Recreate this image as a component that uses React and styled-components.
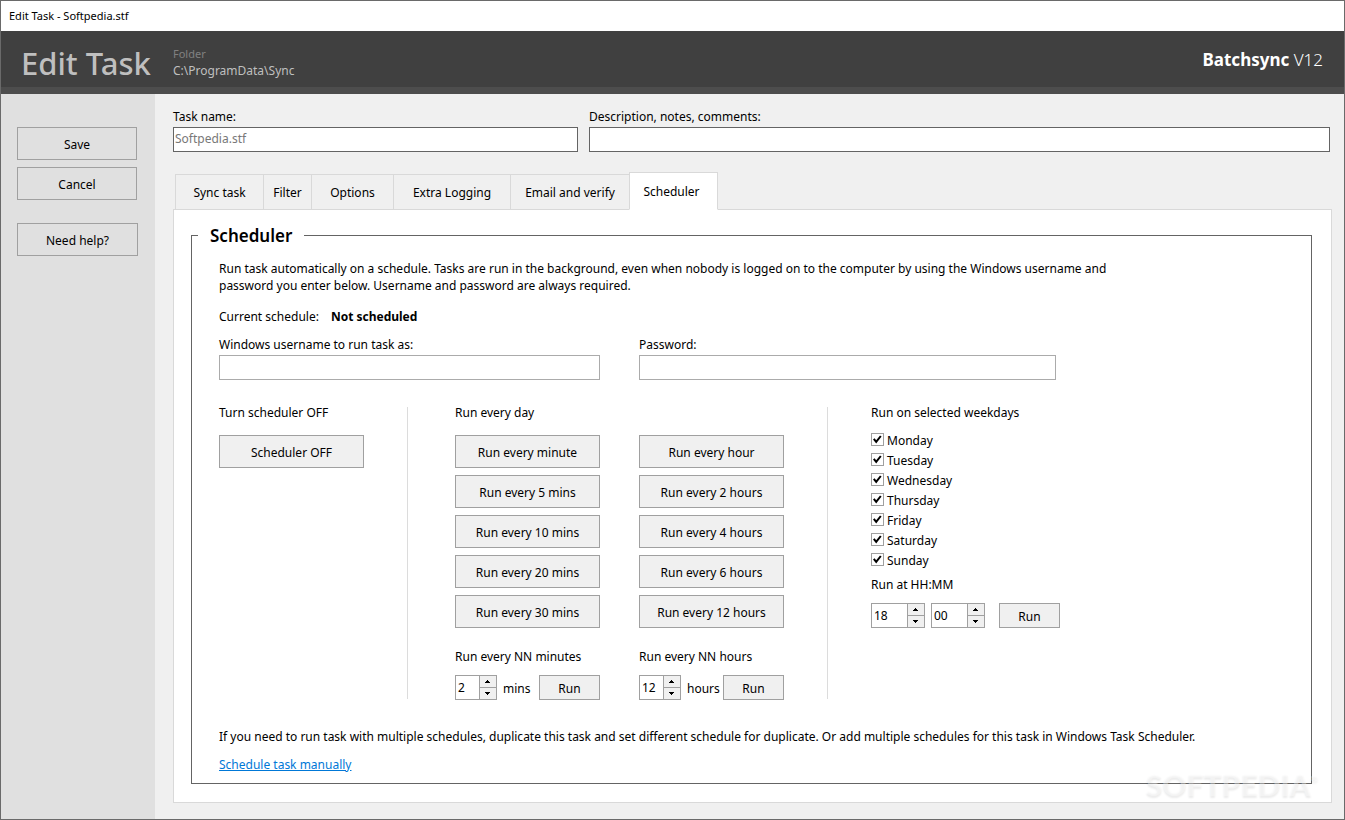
import React, { useState } from 'react';
import styled, { createGlobalStyle, css } from 'styled-components';

const GlobalStyle = createGlobalStyle`
  *, *::before, *::after {
    box-sizing: border-box;
  }

  body {
    margin: 0;
    background: #f0f0f0;
    color: #000;
    font: 12px/17px 'Noto Sans', 'Open Sans', sans-serif;
  }

  button, input {
    font: inherit;
    color: inherit;
    border-radius: 0;
    margin: 0;
  }
`;

const Window = styled.div`
  position: relative;
  display: flex;
  flex-direction: column;
  min-height: 100vh;
  border: 1px solid #6a6a6a;
`;

const TitleBar = styled.div`
  height: 30px;
  padding: 0 8px;
  background: #fff;
  font-size: 11px;
  line-height: 30px;
`;

const Header = styled.header`
  display: flex;
  align-items: center;
  height: 63px;
  padding: 0 21px 0 20px;
  background: #404040;
  border-bottom: 7px solid #4d4d4d;
`;

const Heading = styled.h1`
  width: 152px;
  margin: 0;
  padding-top: 7px;
  color: #bfbfbf;
  font-size: 31px;
  font-weight: 500;
  line-height: 40px;
  white-space: nowrap;
`;

const Folder = styled.div`
  flex: 1;
  padding-top: 6px;
  color: #bfbfbf;
`;

const FolderLabel = styled.div`
  color: #808080;
  font-size: 11px;
`;

const Brand = styled.div`
  padding-top: 1px;
  color: #fff;
  font-size: 17px;
  font-weight: 300;
  line-height: 24px;

  b {
    font-weight: 700;
  }
`;

const Body = styled.div`
  display: flex;
  flex: 1;
`;

const Sidebar = styled.nav`
  display: flex;
  flex-direction: column;
  gap: 7px;
  width: 154px;
  padding: 33px 17px 0 16px;
  background: #e0e0e0;
`;

const Button = styled.button`
  flex: none;
  width: ${({ $small }) => ($small ? '61px' : '100%')};
  height: ${({ $small }) => ($small ? 25 : 33)}px;
  padding: 2px 0 0;
  background: #f0f0f0;
  border: 1px solid #a0a0a0;
  white-space: nowrap;
`;

const SideButton = styled(Button)`
  width: 120px;
  background: #e0e0e0;
`;

const HelpButton = styled(SideButton)`
  width: 121px;
  margin-top: 16px;
`;

const Main = styled.main`
  display: flex;
  flex: 1;
  flex-direction: column;
  min-width: 0;
  padding: 14px 12px 16px 18px;
`;

const TaskFields = styled.div`
  display: grid;
  grid-template-columns: 405fr 741fr;
  gap: 11px;
  margin-right: 2px;
`;

const Field = styled.label`
  display: flex;
  flex-direction: column;
  gap: 2px;
`;

const TextInput = styled.input`
  width: 100%;
  height: 25px;
  padding: 0 1px 2px;
  background: #fff;
  border: 1px solid ${({ $dark }) => ($dark ? '#646464' : '#ababab')};
  color: ${({ $muted }) => ($muted ? '#787878' : '#000')};
`;

const TabList = styled.div`
  display: flex;
  align-items: flex-end;
  height: 38px;
  margin: 20px 0 -1px 2px;
`;

const Tab = styled.button`
  width: ${({ $width }) => $width}px;
  height: 36px;
  padding: 0;
  background: #f0f0f0;
  border: 1px solid #d9d9d9;
  border-right: 0;

  ${({ $active }) =>
    $active &&
    css`
      height: 38px;
      padding: 0 4px 0 0;
      background: #fff;
      border-right: 1px solid #d9d9d9;
      border-bottom-color: #fff;
      z-index: 1;
    `}
`;

const TabPanel = styled.div`
  flex: 1;
  padding: 12px 19px 18px 17px;
  background: #fff;
  border: 1px solid #d9d9d9;
`;

const Group = styled.fieldset`
  min-width: 0;
  height: 100%;
  margin: 0;
  padding: 0 6px;
  border: 1px solid #646464;
`;

const Legend = styled.legend`
  padding: 2px 12px 0;
  font-size: 17px;
  font-weight: 600;
  line-height: 24px;
`;

const GroupBody = styled.div`
  padding: 12px 21px 10px;
`;

const Text = styled.p`
  max-width: ${({ $narrow }) => ($narrow ? '940px' : 'none')};
  margin: 0;
`;

const CurrentSchedule = styled.p`
  display: flex;
  gap: 12px;
  margin: 14px 0 11px;
`;

const Credentials = styled.div`
  display: grid;
  grid-template-columns: 381px 417px;
  gap: 39px;
`;

const Schedules = styled.div`
  display: grid;
  grid-template-columns: 145px 1px 333px 1px 1fr;
  column-gap: 43px;
  margin: 24px 0 28px;
`;

const Divider = styled.div`
  margin: 3px 0 1px;
  background: #dcdcdc;
`;

const Caption = styled.div`
  margin-bottom: ${({ $gap = 14 }) => $gap}px;
`;

const EveryDay = styled.section`
  padding-left: 4px;
`;

const Intervals = styled.div`
  display: grid;
  grid-template-columns: 145px 145px;
  gap: 7px 39px;
  margin-bottom: 20px;
`;

const CustomIntervals = styled(Intervals)`
  margin-bottom: 0;
`;

const Inline = styled.div`
  display: flex;
  align-items: center;
  gap: 6px;
`;

const Unit = styled.span`
  flex: 1;
  min-width: 0;
  margin-right: -6px;
  padding-top: 2px;
  white-space: nowrap;
`;

const Weekday = styled.label`
  display: flex;
  align-items: center;
  gap: 3px;
  height: 20px;
`;

const Tick = styled.span`
  display: grid;
  width: 13px;
  height: 13px;
  margin-bottom: 1px;

  input, svg {
    grid-area: 1 / 1;
    width: 13px;
    height: 13px;
  }

  input {
    appearance: none;
    background: #fff;
    border: 1px solid #a0a0a0;
  }

  svg {
    pointer-events: none;
    visibility: hidden;
  }

  input:checked + svg {
    visibility: visible;
  }
`;

const RunAt = styled.div`
  padding-top: 6px;
`;

const RunAtButton = styled(Button)`
  margin-left: 8px;
`;

const SpinnerBox = styled.span`
  display: flex;
  flex: none;
  width: ${({ $width }) => $width}px;
  height: 25px;
  background: #fff;
  border: 1px solid #a0a0a0;
`;

const SpinnerInput = styled.input`
  flex: 1;
  min-width: 0;
  padding: 0 0 0 2px;
  background: none;
  border: 0;
  outline: 0;
`;

const SpinnerButtons = styled.span`
  display: grid;
  flex: none;
  grid-template-rows: 12px 11px;
  width: 17px;
  border-left: 1px solid #a0a0a0;
`;

const SpinnerButton = styled.button`
  display: flex;
  align-items: center;
  justify-content: center;
  padding: 0 1px 0 0;
  background: #f0f0f0;
  border: 0;

  &:first-child {
    border-bottom: 1px solid #a0a0a0;
  }
`;

const Link = styled.a`
  display: inline-block;
  margin-top: 11px;
  color: #0078d7;
  text-decoration: underline;
`;

const Watermark = styled.div`
  position: absolute;
  right: 26px;
  bottom: 19px;
  color: rgba(255, 255, 255, 0.4);
  font: 900 30px/32px Lato, sans-serif;
  text-shadow: 0 2px 2px rgba(0, 0, 0, 0.08);
  pointer-events: none;

  sup {
    font-size: 9px;
    line-height: 9px;
    vertical-align: 14px;
  }
`;

const Spinner = ({ label, initial, max, pad = 1, width }) => {
  const [value, setValue] = useState(initial);
  const step = (by) =>
    setValue((v) => String(Math.min(max, Math.max(0, Number(v) + by))).padStart(pad, '0'));

  return (
    <SpinnerBox $width={width}>
      <SpinnerInput
        aria-label={label}
        inputMode="numeric"
        value={value}
        onChange={(e) => setValue(e.target.value)}
      />
      <SpinnerButtons>
        <SpinnerButton aria-label={`${label} up`} onClick={() => step(1)}>
          <svg width="5" height="3" viewBox="0 0 5 3" shapeRendering="crispEdges">
            <path d="M2 0h1v1h1v1h1v1H0V2h1V1h1z" />
          </svg>
        </SpinnerButton>
        <SpinnerButton aria-label={`${label} down`} onClick={() => step(-1)}>
          <svg width="5" height="3" viewBox="0 0 5 3" shapeRendering="crispEdges">
            <path d="M0 0h5v1H4v1H3v1H2V2H1V1H0z" />
          </svg>
        </SpinnerButton>
      </SpinnerButtons>
    </SpinnerBox>
  );
};

const CustomInterval = ({ unit, label, initial, max }) => (
  <div>
    <Caption $gap={10}>Run every NN {label}</Caption>
    <Inline>
      <Spinner label={label} initial={initial} max={max} width={42} />
      <Unit>{unit}</Unit>
      <Button $small>Run</Button>
    </Inline>
  </div>
);

const DayCheckbox = ({ day }) => (
  <Weekday>
    <Tick>
      <input type="checkbox" defaultChecked />
      <svg viewBox="0 0 13 13" fill="none" stroke="#000" strokeWidth="2">
        <path d="M2.8 5.8L5.2 8.8L9.8 3" />
      </svg>
    </Tick>
    {day}
  </Weekday>
);

const tabs = [
  { name: 'Sync task', width: 88 },
  { name: 'Filter', width: 48 },
  { name: 'Options', width: 82 },
  { name: 'Extra Logging', width: 117 },
  { name: 'Email and verify', width: 119 },
  { name: 'Scheduler', width: 89 },
];

const intervals = [
  'Run every minute',
  'Run every hour',
  'Run every 5 mins',
  'Run every 2 hours',
  'Run every 10 mins',
  'Run every 4 hours',
  'Run every 20 mins',
  'Run every 6 hours',
  'Run every 30 mins',
  'Run every 12 hours',
];

const days = ['Monday', 'Tuesday', 'Wednesday', 'Thursday', 'Friday', 'Saturday', 'Sunday'];

export default function App() {
  const [activeTab, setActiveTab] = useState('Scheduler');

  return (
    <Window>
      <GlobalStyle />
      <TitleBar>Edit Task - Softpedia.stf</TitleBar>
      <Header>
        <Heading>Edit Task</Heading>
        <Folder>
          <FolderLabel>Folder</FolderLabel>
          C:\ProgramData\Sync
        </Folder>
        <Brand>
          <b>Batchsync</b> V12
        </Brand>
      </Header>

      <Body>
        <Sidebar>
          <SideButton>Save</SideButton>
          <SideButton>Cancel</SideButton>
          <HelpButton>Need help?</HelpButton>
        </Sidebar>

        <Main>
          <TaskFields>
            <Field>
              Task name:
              <TextInput $dark $muted readOnly defaultValue="Softpedia.stf" />
            </Field>
            <Field>
              Description, notes, comments:
              <TextInput $dark />
            </Field>
          </TaskFields>

          <TabList role="tablist">
            {tabs.map(({ name, width }) => (
              <Tab
                key={name}
                role="tab"
                aria-selected={name === activeTab}
                $active={name === activeTab}
                $width={width}
                onClick={() => setActiveTab(name)}
              >
                {name}
              </Tab>
            ))}
          </TabList>

          <TabPanel role="tabpanel">
            <Group>
              <Legend>Scheduler</Legend>
              <GroupBody>
                <Text $narrow>
                  Run task automatically on a schedule. Tasks are run in the background, even when
                  nobody is logged on to the computer by using the Windows username and password
                  you enter below. Username and password are always required.
                </Text>
                <CurrentSchedule>
                  Current schedule: <b>Not scheduled</b>
                </CurrentSchedule>

                <Credentials>
                  <Field>
                    Windows username to run task as:
                    <TextInput />
                  </Field>
                  <Field>
                    Password:
                    <TextInput type="password" />
                  </Field>
                </Credentials>

                <Schedules>
                  <section>
                    <Caption>Turn scheduler OFF</Caption>
                    <Button>Scheduler OFF</Button>
                  </section>
                  <Divider />
                  <EveryDay>
                    <Caption>Run every day</Caption>
                    <Intervals>
                      {intervals.map((name) => (
                        <Button key={name}>{name}</Button>
                      ))}
                    </Intervals>
                    <CustomIntervals>
                      <CustomInterval label="minutes" unit="mins" initial="2" max={59} />
                      <CustomInterval label="hours" unit="hours" initial="12" max={23} />
                    </CustomIntervals>
                  </EveryDay>
                  <Divider />
                  <section>
                    <Caption $gap={9}>Run on selected weekdays</Caption>
                    {days.map((day) => (
                      <DayCheckbox key={day} day={day} />
                    ))}
                    <RunAt>
                      <Caption $gap={10}>Run at HH:MM</Caption>
                      <Inline>
                        <Spinner label="Hour" initial="18" max={23} pad={2} width={54} />
                        <Spinner label="Minute" initial="00" max={59} pad={2} width={54} />
                        <RunAtButton $small>Run</RunAtButton>
                      </Inline>
                    </RunAt>
                  </section>
                </Schedules>

                <Text>
                  If you need to run task with multiple schedules, duplicate this task and set
                  different schedule for duplicate. Or add multiple schedules for this task in
                  Windows Task Scheduler.
                </Text>
                <Link href="#manual">Schedule task manually</Link>
              </GroupBody>
            </Group>
          </TabPanel>
        </Main>
      </Body>
      <Watermark aria-hidden="true">
        SOFTPEDIA<sup>®</sup>
      </Watermark>
    </Window>
  );
}
